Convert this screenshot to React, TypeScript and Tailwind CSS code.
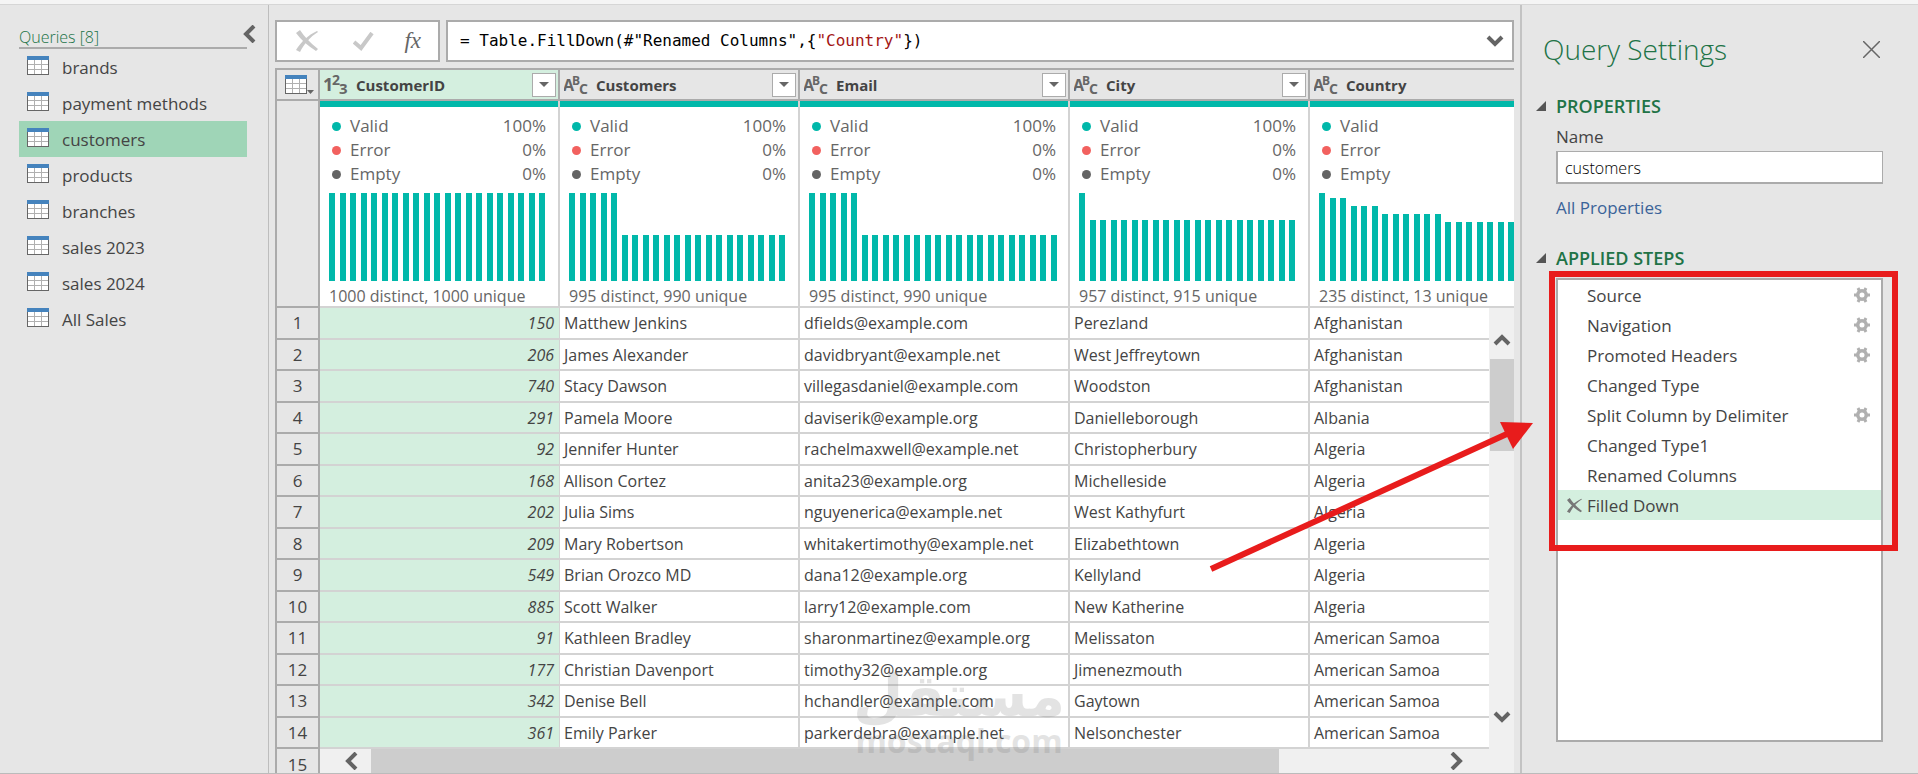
import React from 'react';

type Column = {
  name: string;
  type: 'number' | 'text';
  width: string;
  distinct: string;
  bars: number[];
  clipped?: boolean;
};

const repeat = (count: number, height: number): number[] => Array(count).fill(height);

const queries = ['brands', 'payment methods', 'customers', 'products', 'branches', 'sales 2023', 'sales 2024', 'All Sales'];

const columns: Column[] = [
  { name: 'CustomerID', type: 'number', width: 'w-[240px]', distinct: '1000 distinct, 1000 unique', bars: repeat(21, 88) },
  { name: 'Customers', type: 'text', width: 'w-[240px]', distinct: '995 distinct, 990 unique', bars: [...repeat(5, 88), ...repeat(16, 46)] },
  { name: 'Email', type: 'text', width: 'w-[270px]', distinct: '995 distinct, 990 unique', bars: [...repeat(5, 88), ...repeat(19, 46)] },
  { name: 'City', type: 'text', width: 'w-[240px]', distinct: '957 distinct, 915 unique', bars: [88, ...repeat(20, 61)] },
  {
    name: 'Country',
    type: 'text',
    width: 'w-[270px]',
    distinct: '235 distinct, 13 unique',
    bars: [88, 83, 83, 75, 75, 75, ...repeat(6, 67), ...repeat(12, 59)],
    clipped: true,
  },
];

const rows = [
  ['150', 'Matthew Jenkins', 'dfields@example.com', 'Perezland', 'Afghanistan'],
  ['206', 'James Alexander', 'davidbryant@example.net', 'West Jeffreytown', 'Afghanistan'],
  ['740', 'Stacy Dawson', 'villegasdaniel@example.com', 'Woodston', 'Afghanistan'],
  ['291', 'Pamela Moore', 'daviserik@example.org', 'Danielleborough', 'Albania'],
  ['92', 'Jennifer Hunter', 'rachelmaxwell@example.net', 'Christopherbury', 'Algeria'],
  ['168', 'Allison Cortez', 'anita23@example.org', 'Michelleside', 'Algeria'],
  ['202', 'Julia Sims', 'nguyenerica@example.net', 'West Kathyfurt', 'Algeria'],
  ['209', 'Mary Robertson', 'whitakertimothy@example.net', 'Elizabethtown', 'Algeria'],
  ['549', 'Brian Orozco MD', 'dana12@example.org', 'Kellyland', 'Algeria'],
  ['885', 'Scott Walker', 'larry12@example.com', 'New Katherine', 'Algeria'],
  ['91', 'Kathleen Bradley', 'sharonmartinez@example.org', 'Melissaton', 'American Samoa'],
  ['177', 'Christian Davenport', 'timothy32@example.org', 'Jimenezmouth', 'American Samoa'],
  ['342', 'Denise Bell', 'hchandler@example.com', 'Gaytown', 'American Samoa'],
  ['361', 'Emily Parker', 'parkerdebra@example.net', 'Nelsonchester', 'American Samoa'],
];

const steps = [
  { name: 'Source', settings: true },
  { name: 'Navigation', settings: true },
  { name: 'Promoted Headers', settings: true },
  { name: 'Changed Type', settings: false },
  { name: 'Split Column by Delimiter', settings: true },
  { name: 'Changed Type1', settings: false },
  { name: 'Renamed Columns', settings: false },
  { name: 'Filled Down', settings: false },
];

const TableIcon = () => (
  <svg width="22" height="19" viewBox="0 0 22 19" shapeRendering="crispEdges" aria-hidden="true">
    <rect width="22" height="19" fill="#666" />
    <rect x="1" y="4" width="20" height="14" fill="#fff" />
    <rect width="22" height="4" fill="#4583bd" />
    <path d="M7.5 4v14M14.5 4v14M1 8.5h20M1 13.5h20" stroke="#b0b0b0" />
  </svg>
);

const chevronPaths = {
  up: 'M2 12 9 5l7 7',
  down: 'M2 5l7 7 7-7',
  left: 'M12 1 4 9l8 8',
  right: 'M5 1l8 8-8 8',
};

const Chevron = ({ dir }: { dir: keyof typeof chevronPaths }) => (
  <svg width="18" height="18" viewBox="0 0 18 18" aria-hidden="true">
    <path d={chevronPaths[dir]} fill="none" stroke="#646464" strokeWidth="4" />
  </svg>
);

const CrossIcon = ({ size, color }: { size: number; color: string }) => (
  <svg width={size} height={size} viewBox="0 0 22 22" aria-hidden="true">
    <path d="M4 0C8 6 14 13 22 19l-2 2C12 16 5 10 0 3z" fill={color} />
    <path d="M22 2C14 7 8 14 4 22l-4-2C5 12 12 5 21 1z" fill={color} />
  </svg>
);

// six teeth around a ring
const GearIcon = () => (
  <svg width="16" height="16" viewBox="0 0 16 16" className="mr-[-1px]" aria-hidden="true">
    <circle cx="8" cy="8" r="4.250" fill="none" stroke="#b0b0b0" strokeWidth="3.500" />
    <path d="M0 8h3M13 8h3M4 1l1.500 3M12 1l-1.500 3M4 15l1.500-3M12 15l-1.500-3" stroke="#b0b0b0" strokeWidth="3" />
  </svg>
);

const TypeIcon = ({ type }: { type: Column['type'] }) => {
  const [a, b, c] = type === 'number' ? ['1', '2', '3'] : ['A', 'B', 'C'];
  return (
    <svg width="24" height="24" viewBox="0 0 24 24" fill="#666" aria-hidden="true" className="shrink-0 font-['Open_Sans',sans-serif]">
      <text x="-1" y="18" fontSize={type === 'number' ? 18 : 16}>{a}</text>
      <text x="8" y="12" fontSize={type === 'number' ? 14 : 12}>{b}</text>
      <text x="15" y="21" fontSize={type === 'number' ? 15 : 14}>{c}</text>
    </svg>
  );
};

const QualityLine = ({ color, label, value }: { color: string; label: string; value?: string }) => (
  <div className="flex h-6 items-center text-[17px] text-[#666]">
    <span className={`ml-[3px] mr-[9px] size-[9px] rounded-full ${color}`} />
    <span className="flex-1">{label}</span>
    <span>{value}</span>
  </div>
);

const ColumnProfile = ({ column }: { column: Column }) => (
  <div className="flex h-[205px] flex-col">
    <div className="h-[6px] shrink-0 bg-[#01b8aa]" />
    <div className="pl-[9px] pr-3 pt-[7px]">
      <QualityLine color="bg-[#01b8aa]" label="Valid" value={column.clipped ? undefined : '100%'} />
      <QualityLine color="bg-[#f2615f]" label="Error" value={column.clipped ? undefined : '0%'} />
      <QualityLine color="bg-[#646464]" label="Empty" value={column.clipped ? undefined : '0%'} />
    </div>
    <svg width="250" height="88" className="ml-[9px] mt-[7px] block shrink-0" shapeRendering="crispEdges" aria-hidden="true">
      {column.bars.map((height, i) => (
        <rect key={i} x={Math.round(i * 10.5)} y={88 - height} width="6" height={height} fill="#01b8aa" />
      ))}
    </svg>
    <div className="ml-[9px] mt-[5px] text-base leading-5 text-[#666]">{column.distinct}</div>
  </div>
);

const QueriesPane = () => (
  <aside className="w-[269px] shrink-0 border-r border-[#bdbdbd] pl-[19px] pt-3.5">
    <div className="flex h-7 w-[241px] items-end justify-between">
      <h2 className="text-base leading-5 font-light text-[#217346]">Queries [8]</h2>
      <button type="button" aria-label="Collapse queries" className="pb-1">
        <Chevron dir="left" />
      </button>
    </div>
    <nav className="mr-[21px] border-t-2 border-[#ababab]">
      {queries.map((query) => (
        <a
          key={query}
          href="#"
          className={`flex h-9 items-center gap-[13px] pl-2 text-[17px] text-[#444] ${query === 'customers' ? 'bg-[#9fd5b7]' : ''}`}
        >
          <span className="pb-[3px]">
            <TableIcon />
          </span>
          <span className="pt-0.5">{query}</span>
        </a>
      ))}
    </nav>
  </aside>
);

const FormulaBar = () => (
  <div className="flex h-[42px] gap-1.5">
    <div className="flex w-[165px] items-center justify-between border-2 border-[#ababab] bg-white pl-[19px] pr-[17px]">
      <button type="button" aria-label="Cancel">
        <CrossIcon size={22} color="#c8c8c8" />
      </button>
      <button type="button" aria-label="Commit" className="pl-1">
        <svg width="21" height="19" viewBox="0 0 21 19" aria-hidden="true">
          <path d="M1 10l7 6L19 1" fill="none" stroke="#c8c8c8" strokeWidth="4" />
        </svg>
      </button>
      <button type="button" aria-label="Insert step" className="font-['Liberation_Serif',serif] text-[23px] italic leading-6 text-[#666]">
        fx
      </button>
    </div>
    <div className="flex min-w-0 flex-1 items-center justify-between border-2 border-[#ababab] bg-white pl-3 pr-2">
      <code className="whitespace-pre font-['DejaVu_Sans_Mono',monospace] text-base text-black">
        = Table.FillDown(#"Renamed Columns",{'{'}
        <span className="text-[#a31515]">"Country"</span>
        {'})'}
      </code>
      <button type="button" aria-label="Expand formula bar">
        <Chevron dir="down" />
      </button>
    </div>
  </div>
);

const DataGrid = () => (
  <div className="relative mt-1.5 min-h-0 flex-1 overflow-hidden border-l-2 border-t-2 border-[#ababab]">
    <table className="w-[1303px] table-fixed border-separate border-spacing-0">
      <thead>
        <tr className="h-[31px]">
          <th className="w-[43px] border-b-2 border-r-2 border-[#ababab] p-0">
            <button type="button" aria-label="Table options" className="flex items-end pl-2">
              <TableIcon />
              <svg width="7" height="4" viewBox="0 0 7 4" aria-hidden="true">
                <path d="M0 0h7L3.500 4z" fill="#666" />
              </svg>
            </button>
          </th>
          {columns.map((column) => (
            <th
              key={column.name}
              className={`border-b-2 border-r-2 border-[#ababab] p-0 ${column.width} ${column.type === 'number' ? 'bg-[#d4efdf]' : ''}`}
            >
              <div className="flex h-[29px] items-center pl-1 pr-0.5">
                <TypeIcon type={column.type} />
                <span className="ml-2 flex-1 pt-0.5 text-left text-[15px] font-bold text-[#444]">{column.name}</span>
                <button
                  type="button"
                  aria-label={`Filter ${column.name}`}
                  className="flex size-6 items-center justify-center border border-[#ababab] bg-white"
                >
                  <svg width="10" height="5" viewBox="0 0 10 5" aria-hidden="true">
                    <path d="M0 0h10L5 5z" fill="#666" />
                  </svg>
                </button>
              </div>
            </th>
          ))}
        </tr>
        <tr>
          <td className="border-b-2 border-r-2 border-[#ababab] p-0" />
          {columns.map((column) => (
            <td key={column.name} className="border-b-2 border-r-2 border-[#d3d3d3] bg-white p-0">
              <ColumnProfile column={column} />
            </td>
          ))}
        </tr>
      </thead>
      <tbody className="text-base leading-5 text-[#444]">
        {rows.map((row, i) => (
          <tr key={row[0]} className="odd:h-8 even:h-[31px]">
            <th scope="row" className="border-b-2 border-r-2 border-[#ababab] p-0 text-[17px] font-normal">
              {i + 1}
            </th>
            {row.map((cell, j) =>
              j === 0 ? (
                <td key={j} className="border-b-2 border-r border-[#d3d3d3] bg-[#d4efdf] p-0 pr-[5px] text-right italic">
                  {cell}
                </td>
              ) : (
                <td key={j} className="border-b-2 border-r-2 border-[#d3d3d3] bg-white p-0 pl-1">
                  {cell}
                </td>
              )
            )}
          </tr>
        ))}
        <tr className="h-8">
          <th scope="row" className="border-r-2 border-[#ababab] p-0 text-[17px] font-normal">
            {rows.length + 1}
          </th>
        </tr>
      </tbody>
    </table>

    {/* scrollbars sit on top of the grid */}
    <div className="absolute bottom-0 right-0 top-[238px] flex w-[25px] flex-col items-center bg-[#f0f0f0] pb-[47px] pt-6">
      <Chevron dir="up" />
      <div className="mt-[9px] h-[92px] w-6 bg-[#cdcdcd]" />
      <div className="mt-auto">
        <Chevron dir="down" />
      </div>
    </div>
    <div className="absolute bottom-0 left-[43px] right-0 flex h-6 items-center bg-[#f0f0f0] pl-6 pr-[49px]">
      <Chevron dir="left" />
      <div className="ml-[9px] h-6 w-[81%] bg-[#cdcdcd]" />
      <div className="ml-auto">
        <Chevron dir="right" />
      </div>
    </div>
  </div>
);

const SectionTitle = ({ children }: { children: React.ReactNode }) => (
  <h3 className="flex h-6 items-center gap-2.5 text-[18px] font-semibold text-[#217346]">
    <svg width="10" height="10" viewBox="0 0 10 10" aria-hidden="true">
      <path d="M10 0v10H0z" fill="#555" />
    </svg>
    {children}
  </h3>
);

const SettingsPane = () => (
  <aside className="flex w-[398px] shrink-0 flex-col border-l-2 border-[#c3c3c3] pb-[31px] pl-3.5 pr-[35px] pt-6">
    <div className="flex h-10 items-center justify-between pl-[7px]">
      <h2 className="text-[28px] font-light text-[#217346]">Query Settings</h2>
      <button type="button" aria-label="Close" className="pr-[3px]">
        <svg width="17" height="17" viewBox="0 0 17 17" aria-hidden="true">
          <path d="M0 0l17 17M17 0 0 17" stroke="#666" strokeWidth="1.500" />
        </svg>
      </button>
    </div>
    <div className="mt-[25px]">
      <SectionTitle>PROPERTIES</SectionTitle>
    </div>
    <div className="ml-5 flex flex-col items-start">
      <label htmlFor="query-name" className="mt-[7px] text-[17px] leading-6 text-[#444]">
        Name
      </label>
      <input
        id="query-name"
        defaultValue="customers"
        className="mt-0.5 h-[33px] w-full border border-b-2 border-l-2 border-[#ababab] bg-white px-[7px] pt-0.5 text-base font-light text-black"
      />
      <a href="#" className="mt-3 text-[17px] leading-6 text-[#3b6399]">
        All Properties
      </a>
    </div>
    <div className="mt-[26px]">
      <SectionTitle>APPLIED STEPS</SectionTitle>
    </div>
    <div className="relative ml-5 mt-2 flex-1 border-2 border-[#ababab] bg-white">
      <ol>
        {steps.map((step) => (
          <li key={step.name} className={`flex h-[30px] items-center pr-3 ${step.name === 'Filled Down' ? 'bg-[#d4efdf]' : ''}`}>
            <span className="w-[29px] pl-[9px]">
              {step.name === 'Filled Down' && (
                <button type="button" aria-label="Delete step" className="flex">
                  <CrossIcon size={15} color="#777" />
                </button>
              )}
            </span>
            <span className="flex-1 pt-0.5 text-[17px] leading-6 text-[#444]">{step.name}</span>
            {step.settings && (
              <button type="button" aria-label={`Edit ${step.name}`}>
                <GearIcon />
              </button>
            )}
          </li>
        ))}
      </ol>
      <div className="absolute -left-[9px] -right-[17px] -top-[9px] h-[280px] border-[6px] border-[#e81c1c]" />
      <svg width="330" height="154" viewBox="0 0 330 154" className="absolute -left-[349px] top-[139px]" aria-hidden="true">
        <path d="M2 150 300 14" stroke="#e81c1c" strokeWidth="6" />
        <path d="M291 3l33 1-20 26z" fill="#e81c1c" />
      </svg>
    </div>
  </aside>
);

const Watermark = () => (
  <div className="pointer-events-none absolute bottom-4 left-[858px] flex w-[202px] flex-col items-center text-[#777] opacity-20">
    <span lang="ar" dir="rtl" className="font-['DejaVu_Sans',sans-serif] text-[58px] font-bold leading-[58px]">
      مستقل
    </span>
    <span className="text-[32px] font-bold leading-8">mostaql.com</span>
  </div>
);

export default function App() {
  return (
    <div className="relative flex h-screen flex-col overflow-hidden border-b border-[#bbb] bg-[#e6e6e6] font-['Open_Sans',sans-serif]">
      <div className="h-[5px] shrink-0 border-b border-[#d6d6d6] bg-[#f5f5f5]" />
      <div className="flex min-h-0 flex-1">
        <QueriesPane />
        <main className="flex min-w-0 flex-1 flex-col px-1.5 pt-[15px]">
          <FormulaBar />
          <DataGrid />
        </main>
        <SettingsPane />
      </div>
      <Watermark />
    </div>
  );
}
